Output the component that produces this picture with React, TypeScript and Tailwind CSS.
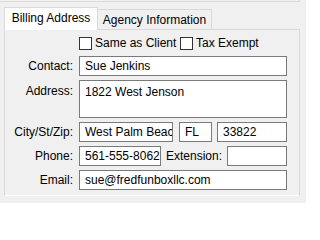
import React from "react";

const font = { fontFamily: '"Liberation Sans", Arial, sans-serif' };

function Box({ text, className = "" }: { text?: string; className?: string }) {
  return (
    <div
      className={`h-[20px] border border-[#7a7a7a] bg-white pl-[5px] flex items-center overflow-hidden whitespace-nowrap text-black ${className}`}
    >
      {text}
    </div>
  );
}

function Check({ label }: { label: string }) {
  return (
    <div className="flex items-center">
      <div className="w-[13px] h-[13px] border border-[#333333] bg-white shrink-0" />
      <span className="ml-[3px] leading-[13px] whitespace-nowrap">{label}</span>
    </div>
  );
}

function Label({ children }: { children: React.ReactNode }) {
  return (
    <div className="w-[68px] mr-[6px] flex justify-end whitespace-nowrap shrink-0">{children}</div>
  );
}

export default function App() {
  return (
    <div className="w-[306px] h-[203px] bg-[#f0f0f0] text-[12px] text-black overflow-hidden" style={font}>
      {/* bottom edge of the panel above */}
      <div className="w-[300px] h-[2px] border-b border-r border-[#dadada]" />

      {/* tab strip */}
      <div className="flex items-end ml-[4px] mt-[5px]">
        <div className="relative z-10 -mb-px w-[94px] h-[23px] bg-white border-l border-t border-r border-[#d9d9d9] flex items-center justify-center pb-[2px] whitespace-nowrap">
          Billing Address
        </div>
        <div className="w-[114px] h-[20px] border-t border-r border-[#d9d9d9] flex items-center justify-center whitespace-nowrap">
          Agency Information
        </div>
      </div>

      {/* tab page */}
      <div className="ml-[4px] w-[296px] h-[167px] border border-[#d9d9d9] border-b-[#fbfbfb] bg-[#f0f0f0] pt-[7px]">
        <div className="flex items-center ml-[74px] h-[13px]">
          <div className="w-[101px] shrink-0">
            <Check label="Same as Client" />
          </div>
          <Check label="Tax Exempt" />
        </div>

        <div className="flex flex-col gap-[4px] mt-[6px]">
          <div className="flex items-center">
            <Label>Contact:</Label>
            <Box text="Sue Jenkins" className="w-[208px]" />
          </div>

          <div className="flex items-start">
            <div className="w-[68px] mr-[6px] flex justify-end whitespace-nowrap shrink-0 pt-[2px]">Address:</div>
            <div className="w-[208px] h-[38px] border border-[#7a7a7a] bg-white pl-[5px] pt-[2px] whitespace-nowrap">
              1822 West Jenson
            </div>
          </div>

          <div className="flex items-center">
            <Label>City/St/Zip:</Label>
            <Box text="West Palm Beach" className="w-[94px]" />
            <Box text="FL" className="w-[33px] ml-[6px]" />
            <Box text="33822" className="w-[70px] ml-[5px]" />
          </div>

          <div className="flex items-center">
            <Label>Phone:</Label>
            <Box text="561-555-8062" className="w-[82px]" />
            <div className="ml-[8px] w-[53px] mr-[5px] flex justify-end whitespace-nowrap">Extension:</div>
            <Box className="w-[60px]" />
          </div>

          <div className="flex items-center">
            <Label>Email:</Label>
            <Box text="sue@fredfunboxllc.com" className="w-[208px]" />
          </div>
        </div>
      </div>
    </div>
  );
}
